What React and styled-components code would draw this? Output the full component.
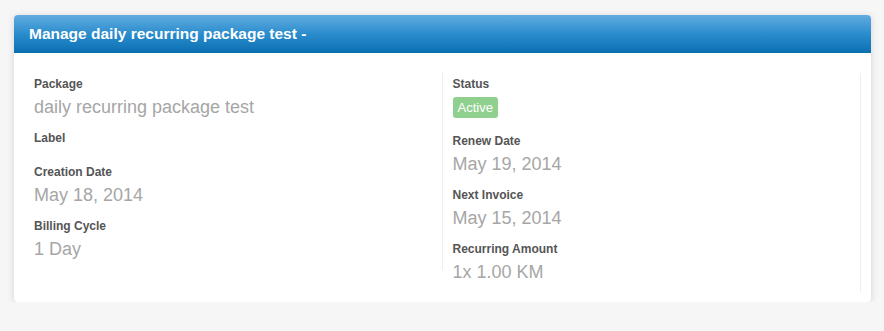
import React from "react";
import styled, { createGlobalStyle } from "styled-components";

const Global = createGlobalStyle`
  html, body { margin: 0; padding: 0; background: #f6f6f6; }
  body { font-family: "Liberation Sans", Arial, Helvetica, sans-serif; }
`;

const Page = styled.div`
  padding: 15px 13px 0 14px;
`;

const Card = styled.section`
  background: #fff;
  border-radius: 4px;
  box-shadow: 0 1px 7px rgba(0, 0, 0, 0.14);
  overflow: hidden;
`;

const Header = styled.header`
  height: 38px;
  display: flex;
  align-items: center;
  padding: 0 15px;
  background: linear-gradient(to bottom, #62acdf 0%, #2a8ccd 50%, #0a6fb1 100%);
`;

const Title = styled.h3`
  margin: 0;
  color: #fff;
  font-size: 15.5px;
  font-weight: bold;
`;

const Body = styled.div`
  display: grid;
  grid-template-columns: 1fr 1fr;
  align-items: start;
  padding: 20px 10px 10px;
`;

const Column = styled.div`
  border-right: 1px solid #eee;
  padding: 3px 10px ${(p) => p.$pb}px;
  display: flex;
  flex-direction: column;
  gap: 10px;
`;

const Item = styled.div`
  display: flex;
  flex-direction: column;
`;

const Label = styled.div`
  font-size: 12px;
  line-height: 16px;
  font-weight: bold;
  color: #555;
`;

const Value = styled.div`
  margin-top: 2px;
  font-size: 18px;
  line-height: 26px;
  color: #a6a6a6;
  min-height: ${(p) => (p.$empty ? "6px" : "26px")};
  height: ${(p) => (p.$empty ? "6px" : "auto")};
`;

const BadgeRow = styled.div`
  margin-top: 2px;
  padding: 3px 0 5px;
  display: flex;
`;

const Badge = styled.span`
  display: inline-flex;
  align-items: center;
  height: 21px;
  padding: 0 5px;
  border-radius: 3px;
  background: #8fd08f;
  color: #fff;
  font-size: 13px;
`;

const Field = ({ label, value }) => (
  <Item>
    <Label>{label}</Label>
    <Value $empty={!value}>{value}</Value>
  </Item>
);

export default function App() {
  return (
    <>
      <Global />
      <Page>
        <Card>
          <Header>
            <Title>Manage daily recurring package test -</Title>
          </Header>
          <Body>
            <Column $pb={8}>
              <Field label="Package" value="daily recurring package test" />
              <Field label="Label" value="" />
              <Field label="Creation Date" value="May 18, 2014" />
              <Field label="Billing Cycle" value="1 Day" />
            </Column>
            <Column $pb={7}>
              <Item>
                <Label>Status</Label>
                <BadgeRow>
                  <Badge>Active</Badge>
                </BadgeRow>
              </Item>
              <Field label="Renew Date" value="May 19, 2014" />
              <Field label="Next Invoice" value="May 15, 2014" />
              <Field label="Recurring Amount" value="1x 1.00 KM" />
            </Column>
          </Body>
        </Card>
      </Page>
    </>
  );
}
